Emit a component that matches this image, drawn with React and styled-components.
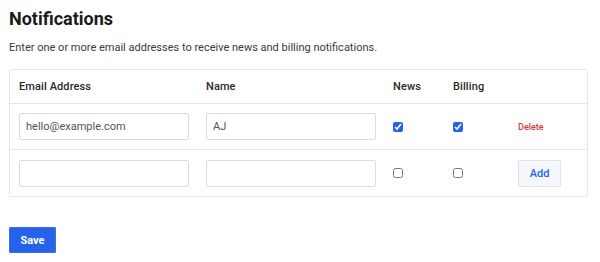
import React, { useState } from "react";
import styled, { createGlobalStyle } from "styled-components";

const GlobalStyle = createGlobalStyle`
  body {
    margin: 0;
    background: #ffffff;
    font-family: Roboto, "Liberation Sans", sans-serif;
  }
`;

const Page = styled.div`
  padding: 8px 12px 0 9px;
  color: #222;
`;

const Title = styled.h1`
  margin: 0;
  font-size: 18px;
  font-weight: 700;
  line-height: 21px;
  color: #1a1a1a;
`;

const Intro = styled.p`
  margin: 12px 0 0;
  font-size: 11px;
  line-height: 13px;
  color: #3a3a3a;
`;

const Table = styled.div`
  margin-top: 15px;
  border: 1px solid #e6e6e9;
  border-radius: 2px;
`;

const Row = styled.div`
  display: grid;
  grid-template-columns: 187px 187px 60px 64px 1fr;
  align-items: center;
  height: ${(p) => p.$height}px;
  border-top: ${(p) => (p.$first ? "none" : "1px solid #e6e6e9")};
`;

const HeadCell = styled.div`
  padding-left: 9px;
  font-size: 11px;
  font-weight: 500;
  letter-spacing: 0.1px;
  color: #2a2a2a;
`;

const Cell = styled.div`
  padding-left: 9px;
  display: flex;
  align-items: center;
`;

const TextInput = styled.input`
  box-sizing: border-box;
  width: 170px;
  height: 27px;
  padding: 0 6px;
  border: 1px solid #dcdce0;
  border-radius: 2px;
  font-family: Roboto, "Liberation Sans", sans-serif;
  font-size: 11px;
  color: #555;
  outline: none;
`;

const Check = styled.input`
  width: 10px;
  height: 10px;
  margin: 0;
  accent-color: #2563eb;
`;

const DeleteLink = styled.button`
  background: none;
  border: none;
  padding: 0 0 0 1px;
  font-family: Roboto, "Liberation Sans", sans-serif;
  font-size: 9px;
  font-weight: 500;
  color: #d9363e;
  cursor: pointer;
`;

const AddButton = styled.button`
  box-sizing: border-box;
  margin-left: 1px;
  width: 43px;
  height: 27px;
  background: #f5f7fc;
  border: 1px solid #dfe1e7;
  border-radius: 2px;
  font-family: Roboto, "Liberation Sans", sans-serif;
  font-size: 11px;
  font-weight: 500;
  color: #2563eb;
  cursor: pointer;
`;

const SaveButton = styled.button`
  box-sizing: border-box;
  margin-top: 30px;
  width: 47px;
  height: 26px;
  background: #2563eb;
  border: 1px solid #3d6fe0;
  border-radius: 1px;
  font-family: Roboto, "Liberation Sans", sans-serif;
  font-size: 11px;
  font-weight: 700;
  color: #ffffff;
  cursor: pointer;
`;

export default function App() {
  const [rows, setRows] = useState([
    { email: "hello@example.com", name: "AJ", news: true, billing: true },
  ]);
  const [draft, setDraft] = useState({ email: "", name: "", news: false, billing: false });

  const update = (i, key, value) =>
    setRows(rows.map((r, j) => (j === i ? { ...r, [key]: value } : r)));

  return (
    <Page>
      <GlobalStyle />
      <Title>Notifications</Title>
      <Intro>Enter one or more email addresses to receive news and billing notifications.</Intro>
      <Table>
        <Row $first $height={33}>
          <HeadCell>Email Address</HeadCell>
          <HeadCell>Name</HeadCell>
          <HeadCell>News</HeadCell>
          <HeadCell>Billing</HeadCell>
          <HeadCell />
        </Row>
        {rows.map((r, i) => (
          <Row key={i} $height={45}>
            <Cell>
              <TextInput value={r.email} onChange={(e) => update(i, "email", e.target.value)} />
            </Cell>
            <Cell>
              <TextInput value={r.name} onChange={(e) => update(i, "name", e.target.value)} />
            </Cell>
            <Cell>
              <Check type="checkbox" checked={r.news} onChange={(e) => update(i, "news", e.target.checked)} />
            </Cell>
            <Cell>
              <Check type="checkbox" checked={r.billing} onChange={(e) => update(i, "billing", e.target.checked)} />
            </Cell>
            <Cell>
              <DeleteLink onClick={() => setRows(rows.filter((_, j) => j !== i))}>Delete</DeleteLink>
            </Cell>
          </Row>
        ))}
        <Row $height={46}>
          <Cell>
            <TextInput value={draft.email} onChange={(e) => setDraft({ ...draft, email: e.target.value })} />
          </Cell>
          <Cell>
            <TextInput value={draft.name} onChange={(e) => setDraft({ ...draft, name: e.target.value })} />
          </Cell>
          <Cell>
            <Check type="checkbox" checked={draft.news} onChange={(e) => setDraft({ ...draft, news: e.target.checked })} />
          </Cell>
          <Cell>
            <Check type="checkbox" checked={draft.billing} onChange={(e) => setDraft({ ...draft, billing: e.target.checked })} />
          </Cell>
          <Cell>
            <AddButton
              onClick={() => {
                if (draft.email.trim()) {
                  setRows([...rows, draft]);
                  setDraft({ email: "", name: "", news: false, billing: false });
                }
              }}
            >
              Add
            </AddButton>
          </Cell>
        </Row>
      </Table>
      <SaveButton>Save</SaveButton>
    </Page>
  );
}
